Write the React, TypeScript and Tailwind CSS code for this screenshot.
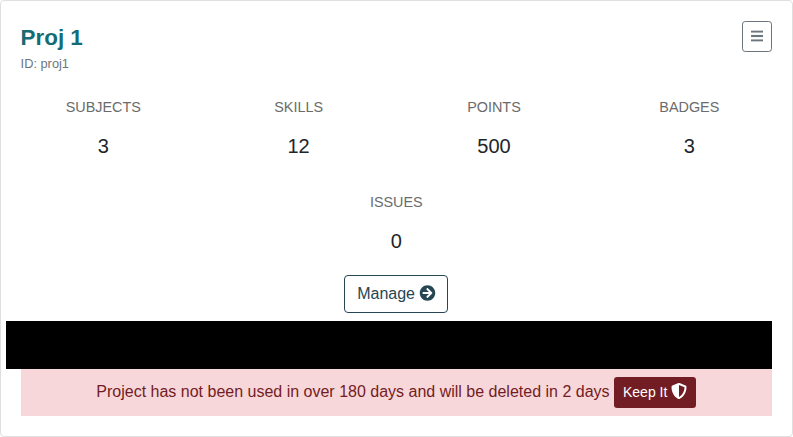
import React from 'react';
import { FaArrowCircleRight, FaBars, FaShieldAlt } from 'react-icons/fa';

const stats = [
  { label: 'Subjects', value: 3 },
  { label: 'Skills', value: 12 },
  { label: 'Points', value: 500 },
  { label: 'Badges', value: 3 },
  { label: 'Issues', value: 0 },
];

function Stat({ label, value }: { label: string; value: number }) {
  return (
    <div className="mb-[30px] w-1/4 text-center">
      <div className="text-[14.4px] leading-[22px] text-[#6b6b6b] uppercase">{label}</div>
      <div className="mt-[13px] text-[20px] leading-[30px] text-[#212529]">{value}</div>
    </div>
  );
}

export default function App() {
  return (
    <div className="flex h-[437px] w-[793px] flex-col rounded-[4px] border border-[#dfdfdf] bg-white pt-5 pr-[20px] pl-[19.6px] font-['Liberation_Sans',Arial,sans-serif] text-[#212529]">
      <header className="flex h-[75px] items-start justify-between">
        <div>
          <h1 className="mt-[3px] text-[22.4px] leading-[27px] font-bold text-[#146c75]">Proj 1</h1>
          <div className="mt-[3px] text-[12.8px] leading-[19px] text-[#6c757d]">ID: proj1</div>
        </div>
        <button className="h-[31px] w-[30px] rounded-[3.2px] border border-[#6c757d] text-center text-[14px] leading-[21px] text-[#6c757d]">
          <FaBars strokeWidth={5} className="inline-block h-[14px] w-[12.25px] align-[-1.75px]" />
        </button>
      </header>
      <div className="-mr-[15px] -ml-[15px] flex flex-wrap justify-center">
        {stats.map((s) => (
          <Stat key={s.label} {...s} />
        ))}
      </div>
      <button className="-mt-[11px] h-[38px] shrink-0 self-center rounded-[4px] border border-[#264653] px-3 text-[16px] leading-6 whitespace-nowrap text-[#264653]">
        Manage <FaArrowCircleRight viewBox="-16 0 512 512" className="inline-block overflow-visible align-[-2px]" size={16} />
      </button>
      <div className="mt-2 -ml-[15px] h-12 shrink-0 bg-black" />
      <div className="h-[47px] shrink-0 bg-[#f8d7da] pt-[7px] text-center text-[16px] leading-[31px] whitespace-nowrap text-[#721c24]">
        Project has not been used in over 180 days and will be deleted in 2 days{' '}
        <button className="h-[31px] rounded-[3.2px] bg-[#721c24] px-[9px] align-middle text-[14px] leading-[21px] text-white">
          Keep It <FaShieldAlt className="inline-block align-[-2px]" size={16} />
        </button>
      </div>
    </div>
  );
}
